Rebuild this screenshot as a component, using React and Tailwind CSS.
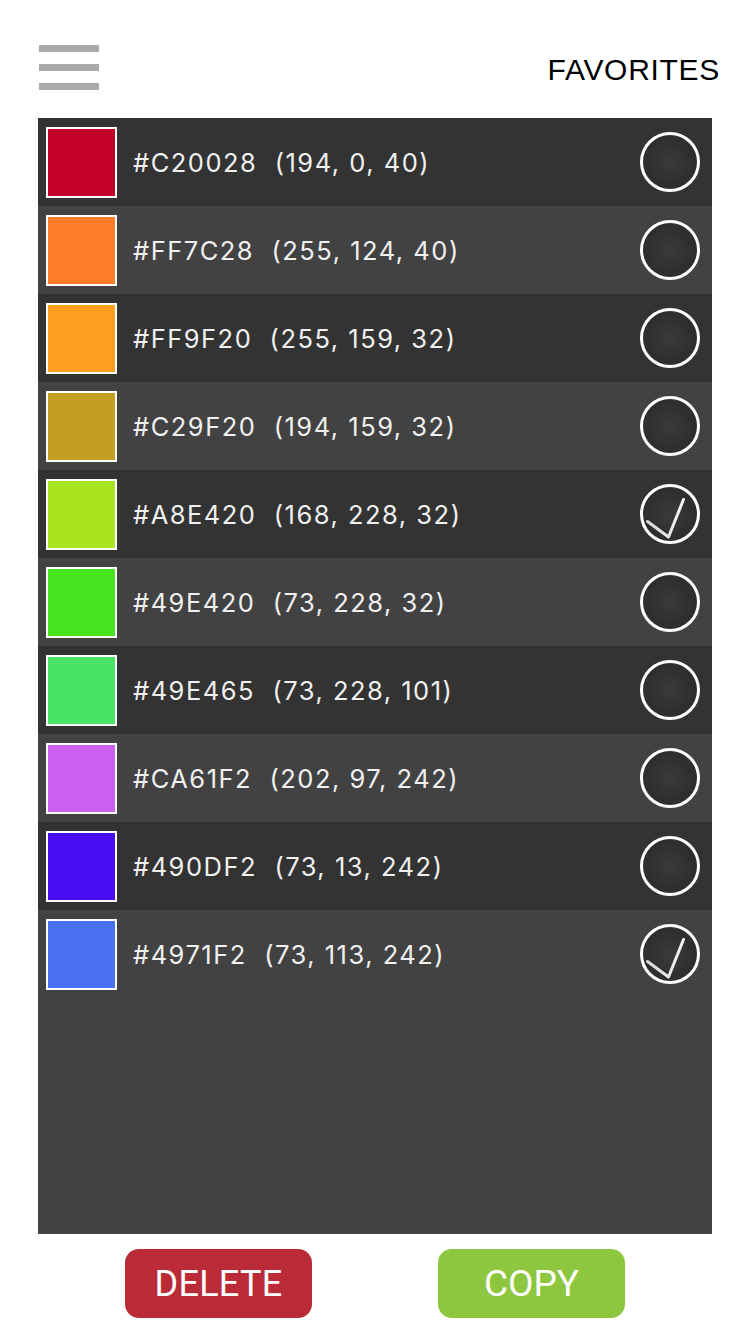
const COLORS = [
  { hex: '#C20028', rgb: '(194, 0, 40)', bg: 'bg-[#c20028]', checked: false },
  { hex: '#FF7C28', rgb: '(255, 124, 40)', bg: 'bg-[#ff7c28]', checked: false },
  { hex: '#FF9F20', rgb: '(255, 159, 32)', bg: 'bg-[#ff9f20]', checked: false },
  { hex: '#C29F20', rgb: '(194, 159, 32)', bg: 'bg-[#c29f20]', checked: false },
  { hex: '#A8E420', rgb: '(168, 228, 32)', bg: 'bg-[#a8e420]', checked: true },
  { hex: '#49E420', rgb: '(73, 228, 32)', bg: 'bg-[#49e420]', checked: false },
  { hex: '#49E465', rgb: '(73, 228, 101)', bg: 'bg-[#49e465]', checked: false },
  { hex: '#CA61F2', rgb: '(202, 97, 242)', bg: 'bg-[#ca61f2]', checked: false },
  { hex: '#490DF2', rgb: '(73, 13, 242)', bg: 'bg-[#490df2]', checked: false },
  { hex: '#4971F2', rgb: '(73, 113, 242)', bg: 'bg-[#4971f2]', checked: true },
];

function CheckCircle({ checked, id }) {
  return (
    <svg width="62" height="62" viewBox="0 0 62 62">
      <defs>
        <radialGradient id={`g${id}`} cx="50%" cy="50%" r="50%">
          <stop offset="0%" stopColor="#3a3a3a" />
          <stop offset="100%" stopColor="#2c2c2c" />
        </radialGradient>
        <linearGradient id={`c${id}`} x1="0" y1="0" x2="1" y2="0">
          <stop offset="0%" stopColor="#d8d8d8" />
          <stop offset="100%" stopColor="#f4f4f4" />
        </linearGradient>
      </defs>
      <circle cx="31" cy="31" r="28.5" fill={`url(#g${id})`} stroke="#ffffff" strokeWidth="3" />
      {checked && (
        <path d="M8.5 38.5 L29.5 54 L44.5 16.5" fill="none" stroke={`url(#c${id})`} strokeWidth="3" strokeLinecap="round" strokeLinejoin="round" />
      )}
    </svg>
  );
}

export default function App() {
  return (
    <div className="w-[750px] h-[1334px] bg-white flex flex-col">
      {/* Header */}
      <div className="h-[118px] flex items-start justify-between pl-[39px] pr-[30px]">
        <div className="mt-[45px] flex flex-col gap-[12px]">
          <div className="w-[60px] h-[7px] bg-[#aaaaaa]" />
          <div className="w-[60px] h-[7px] bg-[#aaaaaa]" />
          <div className="w-[60px] h-[7px] bg-[#aaaaaa]" />
        </div>
        <div className="mt-[54px] text-[30px] leading-[32px] text-black tracking-[0.7px] [font-family:'Liberation_Sans',Arial,sans-serif]">
          FAVORITES
        </div>
      </div>

      {/* List */}
      <div className="mx-[38px] h-[1116px] bg-[#424242] flex flex-col">
        {COLORS.map((c, i) => (
          <div
            key={c.hex}
            className={`h-[88px] flex items-center pl-[8px] pr-[11px] ${i % 2 === 0 ? 'bg-[#333333]' : 'bg-[#424242]'}`}
          >
            <div className={`w-[71px] h-[71px] border-2 border-white ${c.bg}`} />
            <div className="ml-[16px] mt-[2px] flex-1 text-[25.5px] tracking-[1.5px] text-[#f0f0f0] [font-family:Inter,sans-serif] whitespace-pre">
              {c.hex}  {c.rgb}
            </div>
            <CheckCircle checked={c.checked} id={i} />
          </div>
        ))}
      </div>

      {/* Buttons */}
      <div className="flex justify-center gap-[126px] mt-[15px]">
        <button className="w-[187px] h-[69px] rounded-[14px] bg-[#bb2b37] text-white text-[36px] [font-family:Roboto,sans-serif] tracking-[0.3px]">
          DELETE
        </button>
        <button className="w-[187px] h-[69px] rounded-[14px] bg-[#8dc63f] text-white text-[37px] [font-family:Roboto,sans-serif]">
          COPY
        </button>
      </div>
    </div>
  );
}
